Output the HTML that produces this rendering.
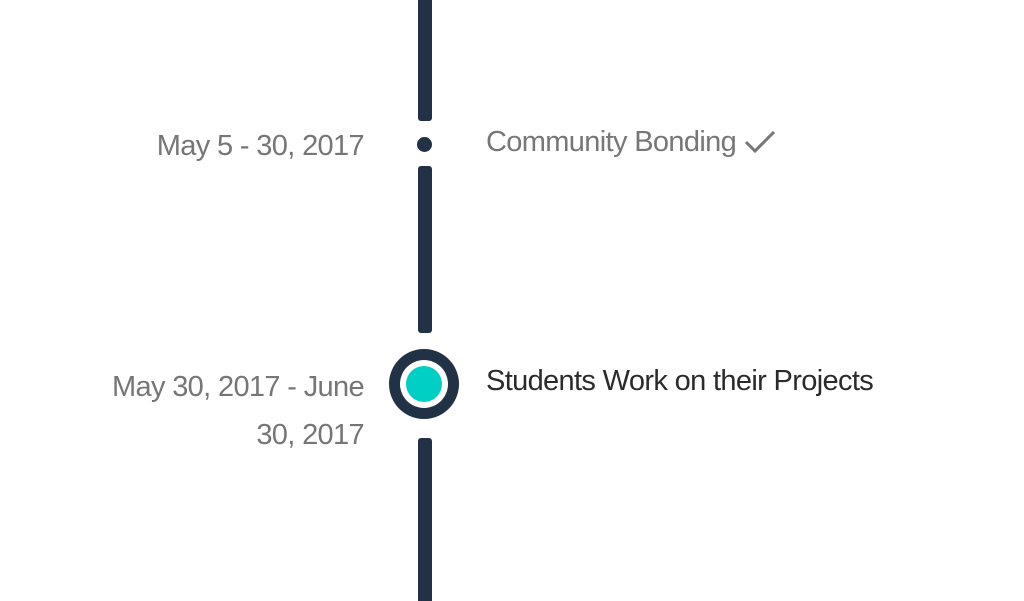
<!DOCTYPE html>
<html><head><style>
html,body{margin:0;padding:0;width:1024px;height:601px;background:#fff;overflow:hidden;position:relative;font-family:"Liberation Sans",sans-serif}
.seg{position:absolute;left:418px;width:14px;background:#223246}
.t{position:absolute;white-space:nowrap;font-size:29px;letter-spacing:-0.65px;line-height:1}
.d{color:#767676;right:660px;text-align:right}
</style></head><body>
<div class="seg" style="top:0;height:121px;border-radius:0 0 3px 3px"></div>
<div style="position:absolute;left:417px;top:137px;width:15px;height:15px;border-radius:50%;background:#223246"></div>
<div class="seg" style="top:166px;height:167px;border-radius:3px"></div>
<div style="position:absolute;left:389px;top:349px;width:70px;height:70px;border-radius:50%;background:#223246"></div>
<div style="position:absolute;left:400px;top:360px;width:48px;height:48px;border-radius:50%;background:#fff"></div>
<div style="position:absolute;left:406px;top:366px;width:36px;height:36px;border-radius:50%;background:#00cfc5"></div>
<div class="seg" style="top:438px;height:170px;border-radius:3px"></div>

<div class="t d" style="top:132px">May 5 - 30, 2017</div>
<div class="t d" style="top:373px">May 30, 2017 - June</div>
<div class="t d" style="top:421px">30, 2017</div>

<div class="t" style="left:486px;top:128px;color:#777">Community Bonding</div>
<svg style="position:absolute;left:744px;top:128px" width="34" height="28" viewBox="0 0 34 28"><path d="M2 14 L11 23 L30 4" fill="none" stroke="#777" stroke-width="3"/></svg>
<div class="t" style="left:486px;top:367px;color:#2b2b2b">Students Work on their Projects</div>
</body></html>
